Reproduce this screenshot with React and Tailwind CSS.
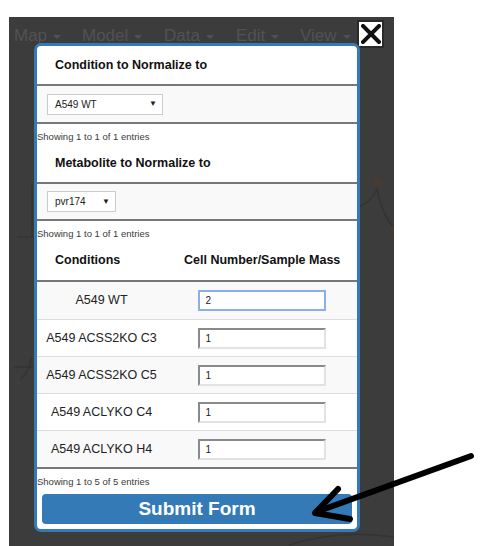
import React from 'react';

const menuItems = [
  { label: 'Map', w: 'w-[68px]' },
  { label: 'Model', w: 'w-[82px]' },
  { label: 'Data', w: 'w-[72px]' },
  { label: 'Edit', w: 'w-[64px]' },
  { label: 'View', w: 'w-[60px]' },
];

const rows = [
  { name: 'A549 WT', value: '2', focused: true },
  { name: 'A549 ACSS2KO C3', value: '1' },
  { name: 'A549 ACSS2KO C5', value: '1' },
  { name: 'A549 ACLYKO C4', value: '1' },
  { name: 'A549 ACLYKO H4', value: '1' },
];

const Caret = () => (
  <span className="inline-block ml-[6px] mt-[2px] w-0 h-0 border-t-[4px] border-t-[#525252] border-x-[4px] border-x-transparent" />
);

const Showing = ({ children }) => (
  <div className="h-[20px] pt-[8px] text-[9.5px] leading-[10px] text-[#3a3a3a]">{children}</div>
);

const SelectBox = ({ value, width }) => (
  <div className={`${width} h-[21px] bg-white border border-[#ccc] flex items-center justify-between pl-[7px] pr-[5px] text-[10px] text-[#222]`}>
    <span>{value}</span>
    <span className="text-[8px]">▼</span>
  </div>
);

export default function App() {
  return (
    <div className="relative w-[489px] h-[546px] bg-white overflow-hidden font-['Liberation_Sans',Arial,sans-serif]">
      {/* dark app backdrop */}
      <div className="relative ml-[9px] mt-[17px] w-[385px] h-[529px] bg-[#3c3c3c]">
        <div className="flex items-center h-[38px] pl-[5px] text-[17px] text-[#525252]">
          {menuItems.map((m) => (
            <div key={m.label} className={`${m.w} flex items-center`}>
              <span>{m.label}</span>
              <Caret />
            </div>
          ))}
        </div>

        {/* faint map drawing behind the dialog */}
        <svg className="absolute left-0 top-0" width="385" height="529" viewBox="0 0 385 529">
          <g stroke="#333" strokeWidth="1.5" fill="none">
            <path d="M23 168 L23 220" />
            <path d="M8 220 L25 220" />
            <path d="M368 172 Q362 185 350 190" />
            <path d="M368 172 Q372 195 384 210" />
            <path d="M5 350 L24 350" />
            <path d="M22 340 Q22 352 12 362" />
            <path d="M280 528 Q330 512 385 520" />
          </g>
          <circle cx="369" cy="165" r="4" fill="#4a3b31" />
          <circle cx="383" cy="212" r="2.5" fill="#4a3b31" />
          <circle cx="18" cy="336" r="2" fill="#4a3b31" />
          <circle cx="9" cy="366" r="2" fill="#4a3b31" />
        </svg>

        {/* close button */}
        <div className="absolute left-[348px] top-[3px] w-[27px] h-[28px] bg-white border-2 border-[#2a2a2a] flex items-center justify-center">
          <svg width="20" height="20" viewBox="0 0 20 20">
            <path d="M2 2 L18 18 M18 2 L2 18" stroke="#111" strokeWidth="4" strokeLinecap="square" />
          </svg>
        </div>

        {/* dialog */}
        <div className="absolute left-[25px] top-[26px] w-[326px] h-[489px] bg-white border-[3px] border-[#337ab7] rounded-[7px] overflow-hidden flex flex-col">
          <div className="h-[40px] shrink-0 border-b-2 border-[#777] flex items-center pl-[18px] text-[12.5px] font-bold text-[#111]">
            Condition to Normalize to
          </div>
          <div className="h-[38px] shrink-0 border-b-2 border-[#777] bg-[#f9f9f9] flex items-center pl-[10px]">
            <SelectBox value="A549 WT" width="w-[116px]" />
          </div>
          <Showing>Showing 1 to 1 of 1 entries</Showing>
          <div className="h-[40px] shrink-0 border-b-2 border-[#777] flex items-center pl-[18px] text-[12.5px] font-bold text-[#111]">
            Metabolite to Normalize to
          </div>
          <div className="h-[37px] shrink-0 border-b-2 border-[#777] bg-[#f9f9f9] flex items-center pl-[10px]">
            <SelectBox value="pvr174" width="w-[69px]" />
          </div>
          <Showing>Showing 1 to 1 of 1 entries</Showing>

          <div className="border-b-2 border-[#777] shrink-0">
            <div className="h-[41px] border-b-2 border-[#777] flex items-center text-[12.5px] font-bold text-[#111]">
              <div className="w-[129px] pl-[18px]">Conditions</div>
              <div className="flex-1 pl-[18px]">Cell Number/Sample Mass</div>
            </div>
            {rows.map((r, i) => (
              <div
                key={r.name}
                className={`h-[37px] flex items-center text-[12.5px] text-[#222] ${i > 0 ? 'border-t border-[#ddd]' : ''} ${i % 2 === 0 ? 'bg-[#f9f9f9]' : 'bg-white'}`}
              >
                <div className="w-[129px] text-center">{r.name}</div>
                <div className="flex-1 flex justify-center">
                  <div
                    className={`w-[128px] h-[21px] bg-white flex items-center pl-[6px] text-[10px] text-[#222] ${
                      r.focused
                        ? 'border-2 border-[#8ab0ea]'
                        : 'border-2 border-t-[#8a8a8a] border-l-[#8a8a8a] border-b-[#e2e2e2] border-r-[#e2e2e2]'
                    }`}
                  >
                    {r.value}
                  </div>
                </div>
              </div>
            ))}
          </div>
          <Showing>Showing 1 to 5 of 5 entries</Showing>

          <div className="mx-[5px] mt-[5px] h-[30px] shrink-0 bg-[#337ab7] rounded-[4px] flex items-center justify-center text-[19px] font-bold text-white">
            Submit Form
          </div>
        </div>
      </div>

      {/* annotation arrow */}
      <svg className="absolute left-0 top-0" width="489" height="546" viewBox="0 0 489 546">
        <g stroke="#000" strokeWidth="6" strokeLinecap="round" strokeLinejoin="round" fill="none">
          <path d="M471 456 L316 512" />
          <path d="M338 489 L315 513 L350 519" />
        </g>
      </svg>
    </div>
  );
}
